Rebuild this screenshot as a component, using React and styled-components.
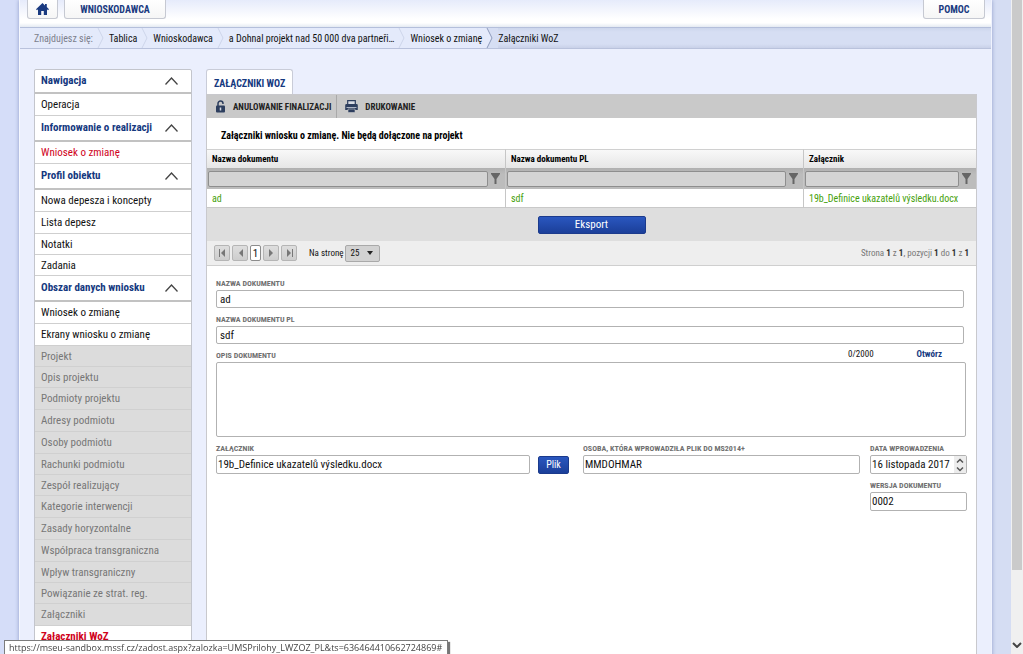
import React from 'react';
import styled, { createGlobalStyle } from 'styled-components';


const GlobalStyle = createGlobalStyle`
    * {
        box-sizing: border-box;
    }
    html, body {
        margin: 0;
        padding: 0;
        overflow: hidden;
        background: #d5ddf4;
    }
    body, button, input, select, textarea {
        font-family: "Roboto Condensed", "Liberation Sans Narrow", Roboto, sans-serif;
        font-size: 11px;
        color: #111;
    }
    a {
        color: inherit;
        text-decoration: none;
    }
    ul, ol {
        margin: 0;
        padding: 0;
        list-style: none;
    }
`;

const Window = styled.div`
    display: flex;
    height: 100vh;
    overflow: hidden;
`;
const Page = styled.div`
    flex: 1;
    min-width: 0;
    padding: 0 19px;
    background: linear-gradient(to right, #d5ddf8, #d5ddf3);
`;
const Shell = styled.div`
    min-height: 100vh;
    background: #ebeffd;
    border-left: 1px solid #f6f8ff;
    border-right: 1px solid #f0f3fe;
    box-shadow: 0 0 4px #8f9cc8;
`;

const TopBar = styled.header`
    display: flex;
    align-items: flex-start;
    gap: 6px;
    height: 27px;
    padding: 0 6px 0 7px;
    background: linear-gradient(#e6ebfb, #fff 70%, #fff 85%, #e4eaf2);
`;
const TopButton = styled.button`
    display: flex;
    align-items: center;
    justify-content: center;
    height: 19px;
    min-width: ${({ $width }) => $width}px;
    margin-left: ${({ $right }) => ($right ? 'auto' : '0')};
    padding: 0;
    border: 1px solid #c6c9d2;
    border-top: none;
    border-radius: 0 0 3px 3px;
    background: linear-gradient(#fff, #f6f6f6);
    color: #1a3a80;
    font-size: 10px;
    font-weight: 700;
`;

const Crumbs = styled.nav`
    height: 22px;
    border-top: 1px solid #b4bfdb;
    border-bottom: 1px solid #b9c2dc;
    background: linear-gradient(#ccd6ec, #d6def3 20%, #d6def3 80%, #c9d1e8);
    ol {
        display: flex;
        height: 20px;
    }
`;
const Crumb = styled.li`
    display: flex;
    align-items: center;
    color: ${({ $muted }) => ($muted ? '#7c7f8c' : '#111')};
    background: ${({ $last }) => ($last ? 'none' : '#e4eafb')};
    padding-left: ${({ $first }) => ($first ? '14px' : '0')};
    font-size: 10px;
    white-space: nowrap;
    svg {
        display: block;
        margin-left: 4px;
    }
`;

const Columns = styled.div`
    display: flex;
    align-items: flex-start;
    gap: 14px;
    padding: 20px 14px 0;
`;

const Sidebar = styled.nav`
    flex: none;
    width: 158px;
    height: 600px;
    border: 1px solid #c3c5cc;
    border-radius: 2px 2px 0 0;
    background: #fff;
    section:first-child h2 {
        height: 24px;
    }
`;
const GroupTitle = styled.h2`
    display: flex;
    align-items: center;
    justify-content: space-between;
    height: 26px;
    margin: 0;
    padding: 0 13px 1px 6px;
    border-bottom: 2px solid #c2c2c2;
    font-size: 11px;
    color: #15397f;
`;
const MenuItem = styled.li`
    height: 22px;
    padding: 1px 6px 0;
    line-height: 20px;
    border-bottom: 1px solid ${({ $disabled }) => ($disabled ? '#d0d0d0' : '#cfcfcf')};
    background: ${({ $disabled }) => ($disabled ? '#dcdcdc' : '#fff')};
    color: ${({ $disabled, $active }) => ($disabled ? '#777' : $active ? '#d0021b' : '#111')};
    font-weight: ${({ $bold }) => ($bold ? 700 : 400)};
    &:nth-child(5n + 3), &:nth-child(5n + 4) {
        height: 21px;
    }
`;

const Main = styled.main`
    flex: 1;
    min-width: 0;
`;
const Tab = styled.a`
    display: inline-block;
    height: 25px;
    padding: 0 7px;
    line-height: 27px;
    border: 1px solid #c9ccd8;
    border-bottom: none;
    border-radius: 3px 3px 0 0;
    background: #fff;
    color: #15397f;
    font-size: 10px;
    font-weight: 700;
    vertical-align: top;
`;
const Panel = styled.div`
    min-height: 600px;
    border: 1px solid #c9c9cd;
    background: #fff;
`;
const Toolbar = styled.div`
    display: flex;
    height: 23px;
    background: #c9c9c9;
`;
const ToolButton = styled.button`
    display: flex;
    align-items: center;
    gap: 7px;
    padding: 0 5px 0 8px;
    border: none;
    border-right: 1px solid ${({ $last }) => ($last ? 'transparent' : '#a9a9a9')};
    background: none;
    color: #222;
    font-size: 9px;
    font-weight: 700;
`;
const Heading = styled.h1`
    height: 31px;
    margin: 0;
    padding-left: 14px;
    line-height: 36px;
    font-size: 10px;
    color: #000;
`;

const Grid = styled.table`
    width: 100%;
    table-layout: fixed;
    border-collapse: separate;
    border-spacing: 0;
    th, td {
        padding: 0 5px;
        text-align: left;
        white-space: nowrap;
        border-right: 1px solid #c6c6c6;
    }
    th:last-child, td:last-child {
        border-right: none;
    }
`;
const HeadCell = styled.th`
    width: ${({ $width }) => $width};
    height: 19px;
    border-top: 1px solid #d0d0d0;
    background: linear-gradient(#f8f8f8, #e6e6e6);
    font-size: 9px;
    color: #000;
`;
const FilterCell = styled.td`
    height: 21px;
    background: linear-gradient(#b0b0b0, #bcbcbc 30%, #bcbcbc);
    && {
        padding: 0 5px 0 1px;
    }
`;
const FilterBox = styled.div`
    display: flex;
    align-items: center;
    gap: 3px;
    input {
        flex: 1;
        min-width: 0;
        height: 16px;
        padding: 0 4px;
        border: 1px solid #8e8e8e;
        border-radius: 2px;
        background: #d4d4d4;
    }
    button {
        display: flex;
        padding: 0;
        border: none;
        background: none;
    }
`;
const DataCell = styled.td`
    height: 19px;
    border-bottom: 1px solid #c9c9c9;
    color: #469f0b;
    font-size: 10px;
`;

const ExportBar = styled.div`
    display: flex;
    justify-content: center;
    align-items: center;
    height: 33px;
    background: #dedede;
`;
const BlueButton = styled.button`
    width: ${({ $width }) => $width}px;
    height: 18px;
    padding: 0;
    line-height: 16px;
    border: 1px solid #1b3a8c;
    border-radius: 2px;
    background: linear-gradient(#2a57bf, #1b3f99);
    color: #fff;
    font-size: ${({ $size }) => $size}px;
`;
const Pager = styled.div`
    display: flex;
    align-items: center;
    gap: 2px;
    height: 25px;
    padding: 0 7px;
    border-bottom: 1px solid #cfcfcf;
    background: #eee;
    font-size: 9px;
    label {
        margin-left: 10px;
    }
`;
const PageButton = styled.button`
    display: flex;
    align-items: center;
    justify-content: center;
    width: ${({ $current }) => ($current ? 11 : 16)}px;
    height: 16px;
    padding: 0;
    border: 1px solid ${({ $current }) => ($current ? '#8c8c8c' : '#b5b5b5')};
    border-radius: 2px;
    background: ${({ $current }) => ($current ? '#fff' : 'linear-gradient(#dedede, #cdcdcd)')};
`;
const SizeSelect = styled.select`
    appearance: none;
    width: 35px;
    height: 17px;
    padding: 0 4px;
    border: 1px solid #a9a9a9;
    border-radius: 2px;
    font-size: 9px;
    background: #d2d2d2 url("data:image/svg+xml,%3Csvg xmlns='http://www.w3.org/2000/svg' width='6' height='4'%3E%3Cpath d='M0 0h6L3 4z' fill='%23222'/%3E%3C/svg%3E") no-repeat right 6px center;
`;
const PageInfo = styled.span`
    margin-left: auto;
    color: #777;
    b {
        color: #333;
    }
`;

const Form = styled.form`
    display: flex;
    flex-direction: column;
    gap: 5px;
    padding: 11px 9px 0;
`;
const FormRow = styled.div`
    display: grid;
    grid-template-columns: minmax(0, 314fr) 31px minmax(0, 285fr) 97px;
    column-gap: 8px;
    align-items: end;
`;
const Field = styled.div`
    display: flex;
    flex-direction: column;
    margin-right: ${({ $inset }) => $inset || 0}px;
    margin-left: ${({ $shift }) => $shift || 0}px;
    grid-column: ${({ $column }) => $column || 'auto'};
    label {
        height: 13px;
        line-height: 14px;
        color: #707070;
        font-size: 8px;
        font-weight: 700;
        text-transform: uppercase;
        white-space: nowrap;
    }
`;
const TextInput = styled.input`
    width: 100%;
    height: ${({ $tall }) => ($tall ? 19 : 18)}px;
    padding: 0 ${({ $tall }) => ($tall ? 1 : 3)}px;
    border: 1px solid #b2b2b2;
    border-radius: 2px;
    background: #fff;
`;
const TextArea = styled.textarea`
    display: block;
    width: 100%;
    height: 75px;
    border: 1px solid #b2b2b2;
    border-radius: 2px;
    resize: none;
`;
const AreaHead = styled.div`
    display: flex;
    align-items: flex-start;
    height: 13px;
    label {
        margin-right: auto;
    }
    span, a {
        line-height: 11px;
        font-size: 9px;
    }
    a {
        margin: 0 24px 0 43px;
        color: #15397f;
        font-weight: 700;
    }
`;
const DateBox = styled.div`
    display: flex;
    height: 19px;
    border: 1px solid #b2b2b2;
    border-radius: 2px;
    input {
        flex: 1;
        min-width: 0;
        padding: 0 1px;
        border: none;
        background: none;
    }
    button {
        display: flex;
        align-items: center;
        padding: 0 2px;
        border: none;
        background: #ececec;
    }
`;

const ScrollBar = styled.div`
    display: flex;
    flex-direction: column;
    justify-content: space-between;
    align-items: center;
    width: 12px;
    padding-bottom: 6px;
    background: #f0f0f0;
    &::before {
        content: '';
        width: 10px;
        height: 88%;
        background: #cacaca;
    }
`;
const StatusBar = styled.div`
    position: fixed;
    left: 4px;
    bottom: 0;
    height: 14px;
    padding: 0 5px 0 4px;
    line-height: 14px;
    border: 1px solid #7c7c7c;
    border-bottom: none;
    background: #fff;
    box-shadow: 2px 2px 1px #777;
    color: #444;
    font-family: "Open Sans", sans-serif;
    font-size: 9px;
    white-space: nowrap;
`;

const menu = [
    { title: 'Nawigacja', items: ['Operacja'] },
    { title: 'Informowanie o realizacji', items: ['Wniosek o zmianę'], active: true },
    { title: 'Profil obiektu', items: ['Nowa depesza i koncepty', 'Lista depesz', 'Notatki', 'Zadania'] },
    { title: 'Obszar danych wniosku', items: ['Wniosek o zmianę', 'Ekrany wniosku o zmianę'] },
];
const disabledItems = [
    'Projekt', 'Opis projektu', 'Podmioty projektu', 'Adresy podmiotu', 'Osoby podmiotu',
    'Rachunki podmiotu', 'Zespół realizujący', 'Kategorie interwencji', 'Zasady horyzontalne',
    'Współpraca transgraniczna', 'Wpływ transgraniczny', 'Powiązanie ze strat. reg.', 'Załączniki',
];
const crumbs = ['Tablica', 'Wnioskodawca', 'a Dohnal projekt nad 50 000 dva partneři…', 'Wniosek o zmianę'];
const columns = [
    { name: 'Nazwa dokumentu', value: 'ad', width: '299px' },
    { name: 'Nazwa dokumentu PL', value: 'sdf', width: '298px' },
    { name: 'Załącznik', value: '19b_Definice ukazatelů výsledku.docx' },
];

const HomeIcon = () => (
    <svg width="13" height="12" viewBox="0 0 13 12" fill="#1a3a80">
        <path d="M6.500 0 L0 6.200 L1 7.200 L2 6.300 V12 H5.200 V8 H7.800 V12 H11 V6.300 L12 7.200 L13 6.200 L10.800 4.100 V1 H9 V2.400 Z" />
    </svg>
);
const LockIcon = () => (
    <svg width="11" height="13" viewBox="0 0 11 13">
        <path d="M3 6V3.500a2.500 2.500 0 0 1 5 0V4" fill="none" stroke="#2d3e5e" strokeWidth="1.500" />
        <rect x="1" y="5.500" width="9" height="7" rx="1" fill="#2d3e5e" />
        <path d="M5.500 7.500v3" stroke="#d5d9e2" strokeWidth="1.500" />
    </svg>
);
const PrintIcon = () => (
    <svg width="13" height="13" viewBox="0 0 13 13">
        <path d="M2.700 5V.7h7.600V5" fill="#d8dce4" stroke="#2d3e5e" strokeWidth="1.200" />
        <path d="M1.500 4h10a1.300 1.300 0 0 1 1.300 1.300V10H.2V5.300A1.300 1.300 0 0 1 1.500 4z" fill="#2d3e5e" />
        <path d="M1.500 7.500h10" stroke="#aeb6c6" />
        <path d="M3 9h7v3.500H3z" fill="#2d3e5e" stroke="#c9c9c9" strokeWidth=".6" />
    </svg>
);
const Chevron = () => (
    <svg width="13" height="8" viewBox="0 0 13 8">
        <path d="M.5 7.500 6.500 1l6 6.500" fill="none" stroke="#444" strokeWidth="1.300" />
    </svg>
);
const Funnel = () => (
    <svg width="9" height="11" viewBox="0 0 9 11">
        <path d="M0 0h9v1L5.500 6v5h-2V6L0 1z" fill="#666" />
    </svg>
);
const PagerIcon = ({ flip, bar }) => (
    <svg width="7" height="8" viewBox="0 0 7 8" fill="#777">
        <g transform={flip ? 'matrix(-1 0 0 1 7 0)' : undefined}>
            <path d="M6 0v8L2 4z" />
            {bar && <path d="M0 0h1v8H0z" />}
        </g>
    </svg>
);
const CrumbArrow = ({ end }) => (
    <svg width="12" height="20" viewBox="0 0 12 20">
        {end && <path d="M1 0h11v20H1l5-10z" fill="#d6def3" />}
        <path d="M1 0l5 10-5 10" fill="none" stroke={end ? '#8d9abb' : '#cdd5ea'} />
    </svg>
);

function SideMenu() {
    return (
        <Sidebar>
            {menu.map(({ title, items, active }, i) => (
                <section key={title}>
                    <GroupTitle>{title}<Chevron /></GroupTitle>
                    <ul>
                        {items.map(item => (
                            <MenuItem key={item} $active={active}><a href="#menu">{item}</a></MenuItem>
                        ))}
                        {i === 3 && disabledItems.map(item => (
                            <MenuItem key={item} $disabled>{item}</MenuItem>
                        ))}
                        {i === 3 && <MenuItem $active $bold><a href="#woz">Załączniki WoZ</a></MenuItem>}
                    </ul>
                </section>
            ))}
        </Sidebar>
    )
}

function Attachments() {
    return (
        <>
            <Grid>
                <thead>
                    <tr>
                        {columns.map(({ name, width }) => <HeadCell key={name} $width={width}>{name}</HeadCell>)}
                    </tr>
                </thead>
                <tbody>
                    <tr>
                        {columns.map(({ name }) => (
                            <FilterCell key={name}>
                                <FilterBox>
                                    <input aria-label={name} />
                                    <button type="button" aria-label="Filtr"><Funnel /></button>
                                </FilterBox>
                            </FilterCell>
                        ))}
                    </tr>
                    <tr>
                        {columns.map(({ name, value }) => <DataCell key={name}>{value}</DataCell>)}
                    </tr>
                </tbody>
            </Grid>
            <ExportBar><BlueButton $width={108} $size={11}>Eksport</BlueButton></ExportBar>
            <Pager>
                <PageButton aria-label="Pierwsza"><PagerIcon bar /></PageButton>
                <PageButton aria-label="Poprzednia"><PagerIcon /></PageButton>
                <PageButton $current>1</PageButton>
                <PageButton aria-label="Następna"><PagerIcon flip /></PageButton>
                <PageButton aria-label="Ostatnia"><PagerIcon flip bar /></PageButton>
                <label htmlFor="size">Na stronę</label>
                <SizeSelect id="size"><option>25</option></SizeSelect>
                <PageInfo>Strona <b>1</b> z <b>1</b>, pozycji <b>1</b> do <b>1</b> z <b>1</b></PageInfo>
            </Pager>
        </>
    )
}

function DocumentForm() {
    return (
        <Form>
            <Field $inset={3}>
                <label htmlFor="name">Nazwa dokumentu</label>
                <TextInput id="name" defaultValue="ad" />
            </Field>
            <Field $inset={3}>
                <label htmlFor="namePl">Nazwa dokumentu PL</label>
                <TextInput id="namePl" defaultValue="sdf" />
            </Field>
            <Field $inset={1}>
                <AreaHead>
                    <label htmlFor="desc">Opis dokumentu</label>
                    <span>0/2000</span>
                    <a href="#open">Otwórz</a>
                </AreaHead>
                <TextArea id="desc" />
            </Field>
            <FormRow>
                <Field>
                    <label htmlFor="file">Załącznik</label>
                    <TextInput id="file" $tall defaultValue="19b_Definice ukazatelů výsledku.docx" />
                </Field>
                <BlueButton type="button" $width={31} $size={10}>Plik</BlueButton>
                <Field $shift={6} $inset={2}>
                    <label htmlFor="person">Osoba, która wprowadziła plik do MS2014+</label>
                    <TextInput id="person" $tall defaultValue="MMDOHMAR" />
                </Field>
                <Field>
                    <label htmlFor="date">Data wprowadzenia</label>
                    <DateBox>
                        <input id="date" defaultValue="16 listopada 2017" />
                        <button type="button" aria-label="Zmień datę">
                            <svg width="8" height="14" viewBox="0 0 8 14" fill="none" stroke="#555" strokeWidth="1.500">
                                <path d="M1 4.500 4 1.500l3 3M1 9.500l3 3 3-3" />
                            </svg>
                        </button>
                    </DateBox>
                </Field>
            </FormRow>
            <FormRow>
                <Field $column="4">
                    <label htmlFor="version">Wersja dokumentu</label>
                    <TextInput id="version" $tall defaultValue="0002" />
                </Field>
            </FormRow>
        </Form>
    )
}

function App() {
    return (
        <Window>
            <GlobalStyle />
            <Page>
                <Shell>
                    <TopBar>
                        <TopButton $width={31} aria-label="Start"><HomeIcon /></TopButton>
                        <TopButton $width={102}>WNIOSKODAWCA</TopButton>
                        <TopButton $width={62} $right>POMOC</TopButton>
                    </TopBar>
                    <Crumbs>
                        <ol>
                            <Crumb $muted $first>Znajdujesz się:<CrumbArrow /></Crumb>
                            {crumbs.map((crumb, i) => (
                                <Crumb key={crumb}>
                                    <a href="#crumb">{crumb}</a>
                                    <CrumbArrow end={i === crumbs.length - 1} />
                                </Crumb>
                            ))}
                            <Crumb $last>Załączniki WoZ</Crumb>
                        </ol>
                    </Crumbs>
                    <Columns>
                        <SideMenu />
                        <Main>
                            <Tab href="#woz">ZAŁĄCZNIKI WOZ</Tab>
                            <Panel>
                                <Toolbar>
                                    <ToolButton><LockIcon />ANULOWANIE FINALIZACJI</ToolButton>
                                    <ToolButton $last><PrintIcon />DRUKOWANIE</ToolButton>
                                </Toolbar>
                                <Heading>Załączniki wniosku o zmianę. Nie będą dołączone na projekt</Heading>
                                <Attachments />
                                <DocumentForm />
                            </Panel>
                        </Main>
                    </Columns>
                </Shell>
            </Page>
            <ScrollBar>
                <svg width="10" height="6" viewBox="0 0 10 6"><path d="M1 1l4 4 4-4" fill="none" stroke="#444" strokeWidth="2" /></svg>
            </ScrollBar>
            <StatusBar>https://mseu-sandbox.mssf.cz/zadost.aspx?zalozka=UMSPrilohy_LWZOZ_PL&amp;ts=636464410662724869#</StatusBar>
        </Window>
    )
}

export default App
